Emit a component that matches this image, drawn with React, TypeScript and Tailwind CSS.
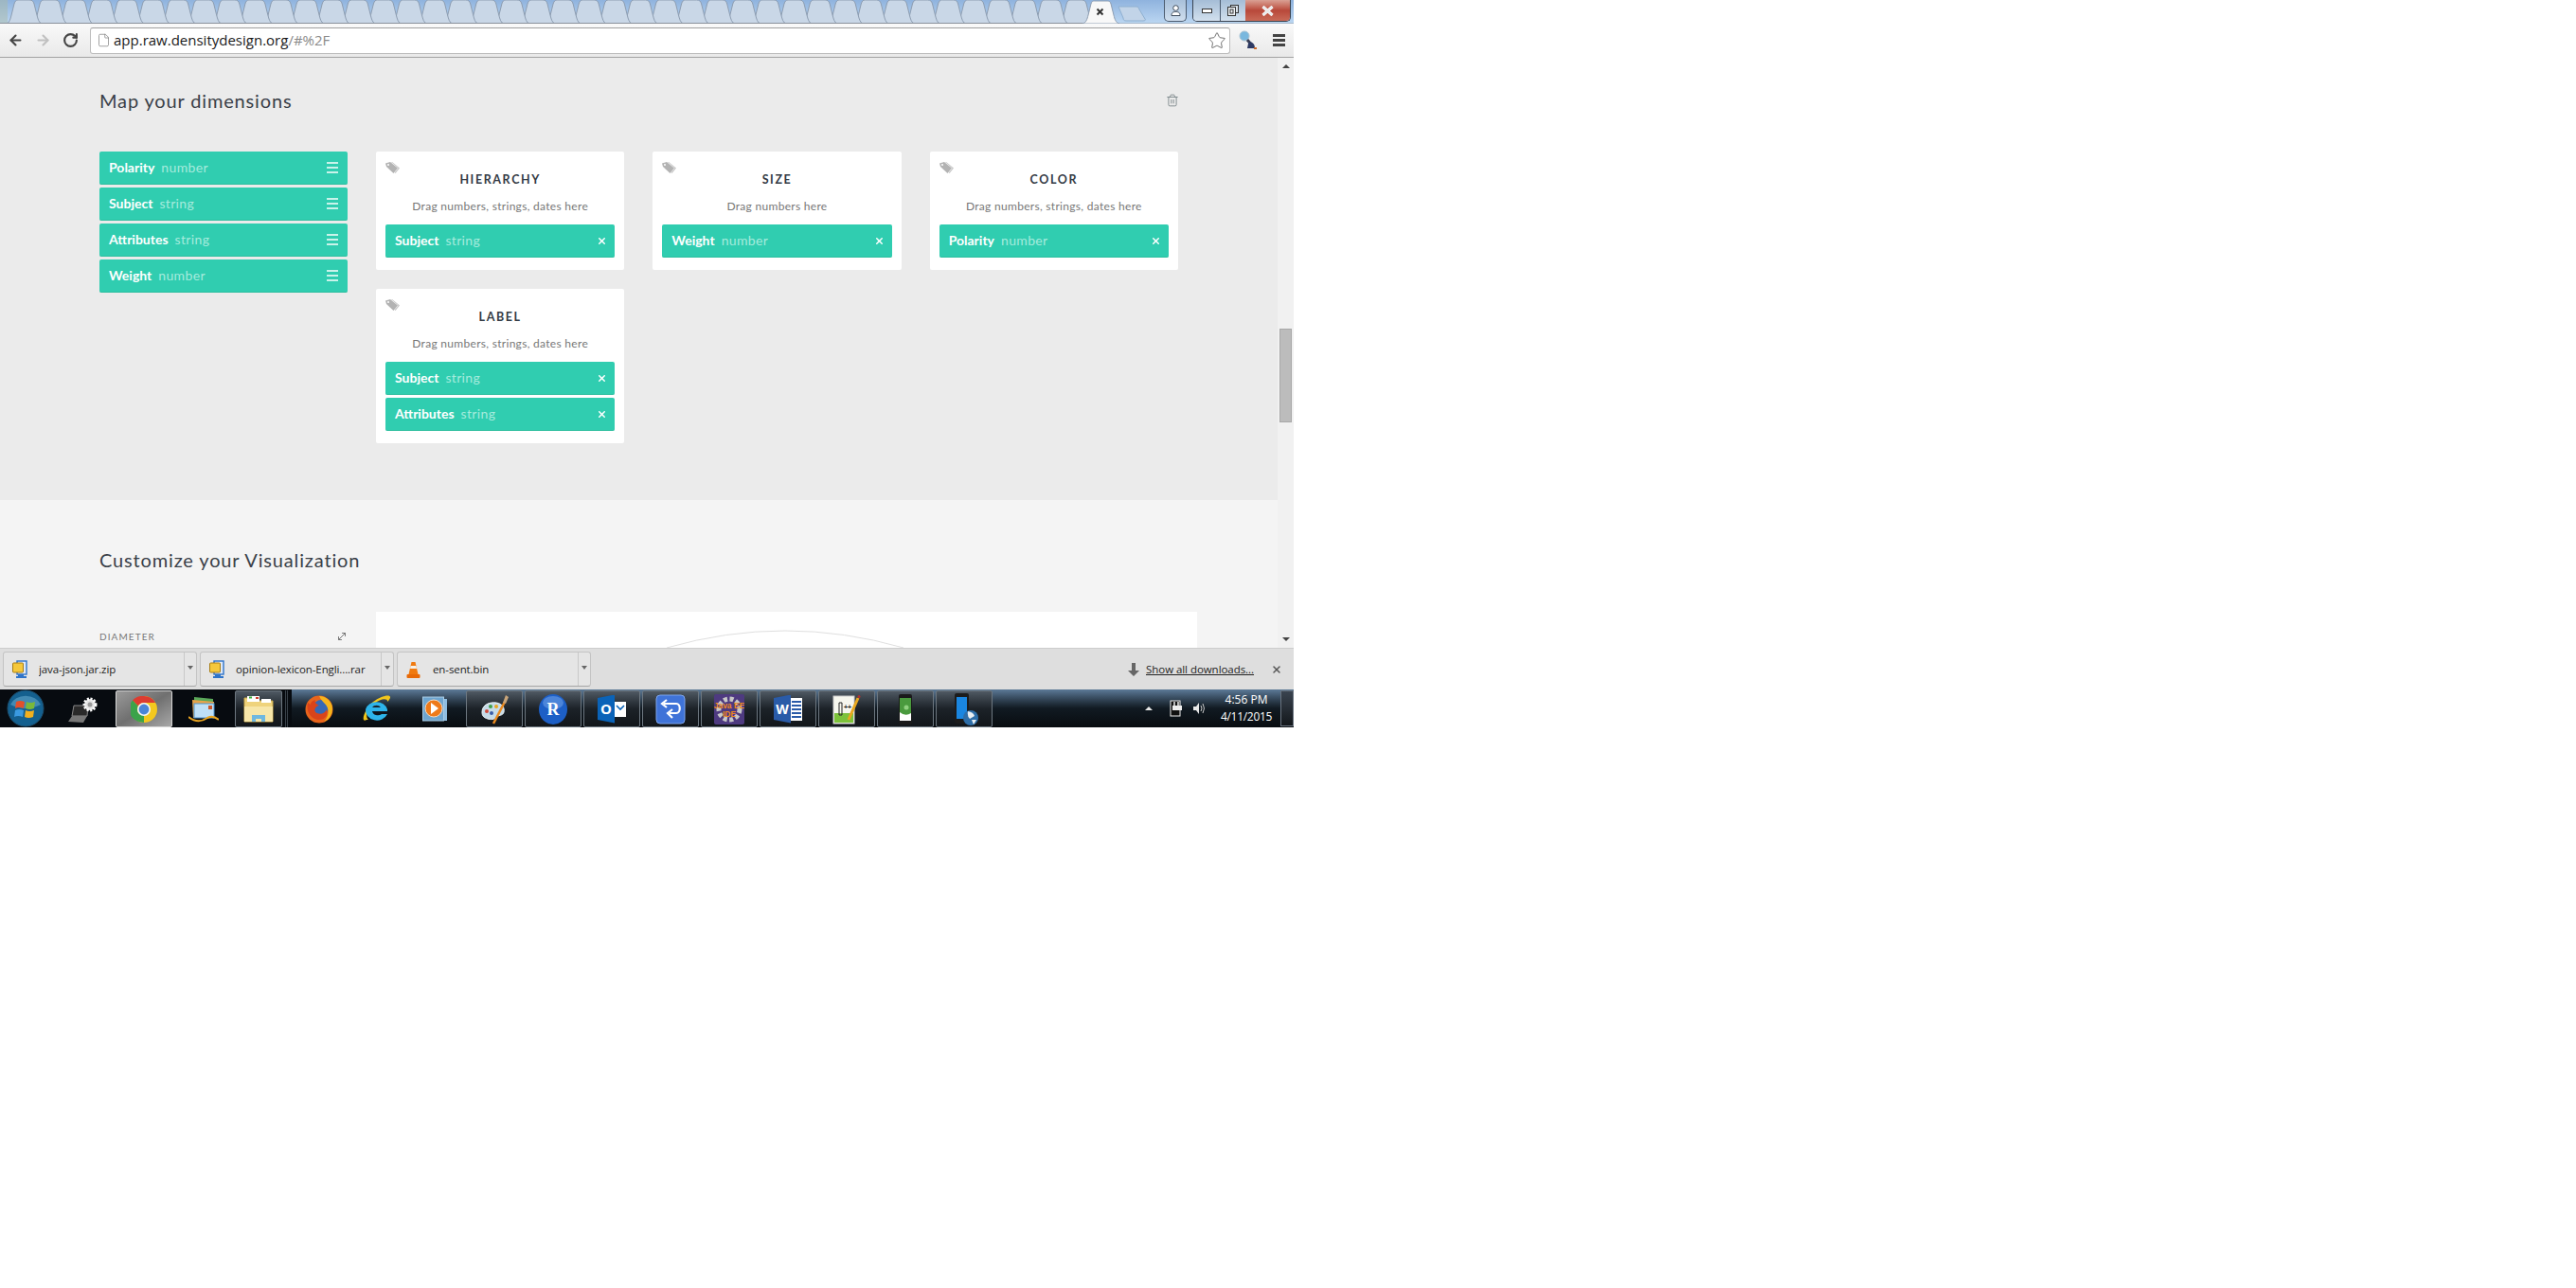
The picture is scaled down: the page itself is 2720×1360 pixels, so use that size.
import { ArrowLeft, ArrowRight, RotateCw, Star, X, Trash2, MoveDiagonal, File } from "lucide-react";

const chrome = "font-['Open_Sans',sans-serif]";
const karla = "font-['Lato',sans-serif]";

const Pill = ({ name, type, close }: { name: string; type: string; close?: boolean }) => (
  <div className="flex h-[35px] items-center justify-between rounded-[2px] border-b border-[#2dbf9f] bg-[#30cdb0] px-[10px]">
    <div className="flex items-baseline gap-[7px] pb-[2px] text-[14px]">
      <span className="font-bold text-white">{name}</span>
      <span className="tracking-[0.35px] text-[#a6ebdd]">{type}</span>
    </div>
    {close ? (
      <X size={11} strokeWidth={3.2} className="mr-[-2px] text-white" />
    ) : (
      <div className="flex w-[12px] flex-col gap-[3px]">
        <div className="h-[2px] bg-[#c9f3ea]" />
        <div className="h-[2px] bg-[#c9f3ea]" />
        <div className="h-[2px] bg-[#c9f3ea]" />
      </div>
    )}
  </div>
);

const TagIcon = () => (
  <svg width="16" height="12" viewBox="0 0 16 12" className="absolute left-[10px] top-[11px]">
    <path d="M0 1.5 L5 0 L13 6.5 L8.5 12 L1 5 Z" fill="#b3b3b3" />
    <path d="M7 0 L15 6.5 L10.5 12 L9.7 11.3 L13.5 6.5 L6 0 Z" fill="#c4c4c4" />
    <circle cx="3" cy="3" r="1" fill="#fff" />
  </svg>
);

const Card = ({ title, hint, items }: { title: string; hint: string; items: [string, string][] }) => (
  <div className="relative rounded-[2px] bg-white px-[10px] pb-[13px] pt-[10px]">
    <TagIcon />
    <div className="mt-[10px] text-center text-[12.5px] font-bold leading-[20px] tracking-[1.6px] text-[#333a44]">{title}</div>
    <div className="mt-[9px] text-center text-[12px] leading-[18px] tracking-[0.3px] text-[#777]">{hint}</div>
    <div className="mt-[10px] flex flex-col gap-[3px]">
      {items.map(([n, t]) => (
        <Pill key={n} name={n} type={t} close />
      ))}
    </div>
  </div>
);

const TabStrip = () => (
  <div className="relative h-[25px] shrink-0 bg-linear-to-b from-[#8fb3de] to-[#bcd7f2]">
    <svg width="1366" height="25" className="block">
      <rect x="0" y="0" width="8" height="25" fill="#a9b9a9" opacity="0.5" />
      {Array.from({ length: 42 })
        .map((_, i) => 7 + i * 27.1)
        .reverse()
        .map((x) => (
          <path
            key={x}
            d={`M${x} 25 C${x + 3} 24 ${x + 4} 20 ${x + 5} 16 L${x + 8} 4 C${x + 9} 1 ${x + 10} 0 ${x + 12} 0 L${x + 24} 0 C${x + 27} 0 ${x + 28} 1 ${x + 29} 4 L${x + 32} 16 C${x + 33} 20 ${x + 34} 24 ${x + 37} 25 Z`}
            fill="#c9d7e7"
            stroke="#8d9db1"
            strokeWidth="1"
          />
        ))}
      <rect x="0" y="24" width="1146" height="1" fill="#8a929c" />
      <rect x="1180" y="24" width="186" height="1" fill="#a6b8cc" />
      <path d="M1143 25 C1147 24 1148 20 1149 16 L1152 4 C1153 1 1154 1 1156 1 L1168 1 C1171 1 1172 1 1173 4 L1176 16 C1177 20 1178 24 1182 25 Z" fill="#f8f8f8" stroke="#8d9db1" />
      <path d="M1181 7 L1200 7 C1202 7 1202 8 1203 10 L1209 20 C1210 21 1209 22 1207 22 L1189 22 C1187 22 1186 21 1186 19 Z" fill="#c2d4e8" stroke="#8fb0d0" />
      <path d="M1158.5 9.5 L1164.5 15.5 M1164.5 9.5 L1158.5 15.5" stroke="#333" strokeWidth="2" />
    </svg>
    <div className="absolute right-[113px] top-0 flex h-[23px] w-[24px] items-center justify-center rounded-b-[5px] border border-t-0 border-[#4c5c70] bg-linear-to-b from-[#a8c0da] to-[#cfdeee]">
      <svg width="11" height="13" viewBox="0 0 11 13">
        <circle cx="5.5" cy="3.5" r="2.8" fill="#fff" stroke="#3d4a5a" />
        <path d="M1 11.5 C1 8 3 7.5 5.5 7.5 C8 7.5 10 8 10 11.5 Z" fill="#fff" stroke="#3d4a5a" />
      </svg>
    </div>
    <div className="absolute right-[3px] top-0 flex h-[23px] overflow-hidden rounded-b-[5px] border border-t-0 border-[#3a4450]">
      <div className="flex w-[29px] items-center justify-center border-r border-[#4c5c70] bg-linear-to-b from-[#a5bdd6] to-[#d2e0ee]">
        <div className="h-[5px] w-[11px] border border-[#333] bg-white" />
      </div>
      <div className="flex w-[26px] items-center justify-center bg-linear-to-b from-[#a5bdd6] to-[#d2e0ee]">
        <svg width="12" height="12" viewBox="0 0 12 12">
          <rect x="3.5" y="0.5" width="8" height="8" fill="#dde6ef" stroke="#333" />
          <rect x="0.5" y="2.5" width="8" height="9" fill="#eef2f6" stroke="#333" />
          <rect x="3" y="5" width="3" height="4" fill="none" stroke="#333" />
        </svg>
      </div>
      <div className="flex w-[47px] items-center justify-center bg-linear-to-b from-[#d9a094] via-[#b8483a] to-[#c96a58]">
        <svg width="13" height="11" viewBox="0 0 13 11">
          <path d="M1.5 1 L11.5 10 M11.5 1 L1.5 10" stroke="#fff" strokeWidth="3.2" />
          <path d="M1.5 1 L11.5 10 M11.5 1 L1.5 10" stroke="#e8eaec" strokeWidth="2" />
        </svg>
      </div>
    </div>
  </div>
);

const Toolbar = () => (
  <div className={`flex h-[36px] shrink-0 items-center border-b border-[#a3a3a3] bg-linear-to-b from-[#f9f9f9] to-[#e9e9e9] ${chrome}`}>
    <div className="ml-[8px] flex w-[87px] shrink-0 items-center gap-[12px]">
      <ArrowLeft size={17} strokeWidth={3} className="text-[#444]" />
      <ArrowRight size={17} strokeWidth={3} className="text-[#c0c0c0]" />
      <RotateCw size={17} strokeWidth={3} className="text-[#444]" />
    </div>
    <div className="flex h-[28px] w-[1204px] shrink-0 items-center rounded-[3px] border border-[#bdbdbd] border-t-[#a0a0a0] bg-white pl-[6px] pr-[3px]">
      <File size={15} strokeWidth={1.1} className="mr-[3px] text-[#777]" />
      <span className="text-[15px] leading-none text-[#1a1a1a]">app.raw.densitydesign.org</span>
      <span className="text-[15px] leading-none text-[#8a8a8a]">/#%2F</span>
      <Star size={20} strokeWidth={1} className="ml-auto text-[#555]" />
    </div>
    <svg width="20" height="24" viewBox="0 0 20 24" className="ml-[9px] shrink-0">
      <circle cx="6" cy="7" r="5" fill="#7ab8de" stroke="#a8c4d4" />
      <path d="M9 11 L15 18" stroke="#3a3f55" strokeWidth="3" />
      <path d="M10 15 C12 12 17 14 17 20 L9 20 Z" fill="#2e3a63" />
      <rect x="16" y="19" width="3" height="2" fill="#c96a2a" />
    </svg>
    <div className="ml-[16px] flex w-[13px] shrink-0 flex-col gap-[2px]">
      <div className="h-[3px] bg-[#444]" />
      <div className="h-[3px] bg-[#444]" />
      <div className="h-[3px] bg-[#444]" />
    </div>
  </div>
);

const Scrollbar = () => (
  <div className="relative flex h-full w-[17px] shrink-0 flex-col items-center justify-between bg-[#f1f1f1] py-[7px]">
    <div className="h-0 w-0 border-x-[4px] border-b-[4px] border-x-transparent border-b-[#444]" />
    <div className="absolute left-[2px] top-[286px] h-[99px] w-[13px] border border-[#a8a8a8] bg-[#bcbcbc]" />
    <div className="h-0 w-0 border-x-[4px] border-t-[4px] border-x-transparent border-t-[#444]" />
  </div>
);

const DownloadItem = ({ name, icon }: { name: string; icon: React.ReactNode }) => (
  <div className="flex h-[37px] w-[205px] shrink-0 rounded-[3px] border border-[#c4c4c4] border-b-[#a6a6a6] bg-[#e5e5e5]">
    <div className="flex w-[191px] items-center border-r border-[#c8c8c8] pl-[9px]">
      <div className="w-[28px] shrink-0">{icon}</div>
      <span className="truncate text-[11.5px] tracking-[-0.1px] text-[#222]">{name}</span>
    </div>
    <div className="flex flex-1 items-center justify-center">
      <div className="mb-[3px] h-0 w-0 border-x-[3px] border-t-[4px] border-x-transparent border-t-[#666]" />
    </div>
  </div>
);

const ZipIcon = () => (
  <svg width="17" height="20" viewBox="0 0 17 20">
    <rect x="5" y="1" width="10" height="14" fill="#dfe9f7" stroke="#2f74c9" strokeWidth="1.4" />
    <rect x="0.5" y="3" width="11" height="10" rx="1" fill="#f5c83c" stroke="#a77d14" />
    <rect x="6" y="15" width="6" height="2" fill="#2f74c9" />
    <rect x="4" y="17" width="11" height="2" fill="#2f74c9" />
  </svg>
);

const ConeIcon = () => (
  <svg width="15" height="20" viewBox="0 0 15 20">
    <path d="M5.5 2 L9.5 2 L12.5 15 L2.5 15 Z" fill="#f07a10" />
    <path d="M4.6 6 L10.4 6 L11 9 L4 9 Z" fill="#f6f1e8" />
    <rect x="0.5" y="15" width="14" height="4" rx="1" fill="#e86a08" />
  </svg>
);

const DownloadBar = () => (
  <div className={`flex h-[44px] shrink-0 items-center border-t border-[#cdcdcd] bg-[#dedede] pl-[3px] ${chrome}`}>
    <div className="flex gap-[3px]">
      <DownloadItem name="java-json.jar.zip" icon={<ZipIcon />} />
      <DownloadItem name="opinion-lexicon-Engli....rar" icon={<ZipIcon />} />
      <DownloadItem name="en-sent.bin" icon={<ConeIcon />} />
    </div>
    <svg width="12" height="14" viewBox="0 0 12 14" className="ml-[567px] shrink-0">
      <path d="M4 0 L8 0 L8 8 L12 8 L6 14 L0 8 L4 8 Z" fill="#666" />
    </svg>
    <span className="ml-[7px] text-[11.5px] tracking-[-0.05px] text-[#222] underline">Show all downloads...</span>
    <X size={12} strokeWidth={3} className="ml-[18px] text-[#555]" />
  </div>
);

const Orb = () => (
  <svg width="40" height="40" viewBox="0 0 40 40">
    <circle cx="20" cy="20" r="19" fill="#14608f" stroke="#1d4e6e" />
    <path d="M4 16 A17 14 0 0 1 36 16 Q20 24 4 16 Z" fill="#6fb4d8" opacity="0.5" />
    <path d="M10 13 Q14 11 19 13 L18 20 Q13 18 9 20 Z" fill="#e2502b" />
    <path d="M21 13 Q25 15 30 13 L29 20 Q24 22 20 20 Z" fill="#7ab83a" />
    <path d="M9 22 Q13 20 18 22 L17 29 Q12 27 8 29 Z" fill="#3a9ae0" />
    <path d="M20 22 Q24 24 29 22 L28 29 Q23 31 19 29 Z" fill="#f2b01e" />
  </svg>
);

const Laptop = () => (
  <svg width="32" height="30" viewBox="0 0 32 30">
    <path d="M6 11 L21 11 L20 22 L4 22 Z" fill="#2a2a2a" stroke="#888" />
    <path d="M4 22 L20 22 L16 29 L0 28 Z" fill="#777" />
    <circle cx="23" cy="10" r="6" fill="#e4e4e4" stroke="#fff" strokeWidth="3" strokeDasharray="2 1.5" />
    <circle cx="23" cy="10" r="2.5" fill="#999" />
  </svg>
);

const ChromeIcon = () => (
  <svg width="28" height="28" viewBox="0 0 28 28">
    <circle cx="14" cy="14" r="14" fill="#f3c81e" />
    <path d="M14 0 A14 14 0 0 1 26.1 7 L14 7 A7 7 0 0 0 7.9 10.5 L2 4.6 A14 14 0 0 1 14 0 Z" fill="#dc3c31" />
    <path d="M2 4.6 L7.9 10.5 A7 7 0 0 0 12 20.7 L8 27 A14 14 0 0 1 2 4.6 Z" fill="#3ba34a" />
    <path d="M8 27 L14 14 L14 28 Z" fill="#3ba34a" />
    <circle cx="14" cy="14" r="6.2" fill="#4a85d8" stroke="#f4f4f4" strokeWidth="1.6" />
  </svg>
);

const MailIcon = () => (
  <svg width="32" height="30" viewBox="0 0 32 30">
    <path d="M6 2 L26 4 L26 22 L6 22 Z" fill="#5aa85a" />
    <path d="M4 5 L27 7 L27 24 L5 24 Z" fill="#e7a44a" />
    <rect x="6" y="9" width="21" height="15" fill="#bfe0f7" stroke="#4c93cf" />
    <rect x="21" y="11" width="4" height="4" fill="#c9552a" />
    <path d="M0 23 Q10 31 20 24 Q26 21 32 26" fill="none" stroke="#e9a420" strokeWidth="2" />
  </svg>
);

const FolderIcon = () => (
  <svg width="32" height="30" viewBox="0 0 32 30">
    <path d="M1 3 L13 3 L15 6 L31 6 L31 28 L1 28 Z" fill="#efd37c" stroke="#c9a94a" />
    <rect x="4" y="1" width="13" height="6" fill="#fff" />
    <rect x="6" y="1.5" width="3" height="2" fill="#3faf3f" />
    <rect x="13" y="2" width="3" height="2" fill="#d03a2a" />
    <rect x="19" y="4" width="10" height="4" fill="#fff" />
    <path d="M1 12 L31 12 L31 28 L1 28 Z" fill="#f7e6a8" />
    <path d="M9 28 L9 21 L23 21 L23 28 L19 28 L19 25 L13 25 L13 28 Z" fill="#6fb8e0" />
  </svg>
);

const Firefox = () => (
  <svg width="30" height="30" viewBox="0 0 30 30">
    <circle cx="15" cy="15" r="14.5" fill="#e8641b" />
    <circle cx="17" cy="13" r="8" fill="#3668b4" />
    <path d="M15 1 A14 14 0 0 1 29 15 A14 14 0 0 1 20 28 C26 22 26 14 21 9 C19 7 17 5 15 1 Z" fill="#f5b51c" />
    <path d="M3 8 C1 16 5 24 13 26 C21 27 25 21 23 15 C21 20 15 21 11 18 C9 15 12 11 15 11 C11 9 10 7 11 5 C7 6 6 8 6 10 Z" fill="#d9441a" />
  </svg>
);

const IE = () => (
  <svg width="32" height="30" viewBox="0 0 32 30">
    <path d="M5 26 C-2 30 3 14 12 7 C20 1 31 -2 30 3 C29 5 28 6 27 7 C28 3 20 3 13 9 C6 15 3 23 7 26 Z" fill="#f0c51c" />
    <path d="M4 15 A12 11 0 0 1 27 15 L27 17 L11 17 A6 5 0 0 0 21 20 L27 20 A12 11 0 0 1 4 15 Z M11 13 L20 13 A5 4 0 0 0 11 13 Z" fill="#2db4ea" fillRule="evenodd" />
  </svg>
);

const Wmp = () => (
  <svg width="28" height="28" viewBox="0 0 28 28">
    <rect x="4" y="3" width="22" height="23" fill="#8fbde0" />
    <rect x="0.5" y="1" width="22" height="25" fill="#6ea5cf" stroke="#a9cbe4" />
    <circle cx="12" cy="13" r="9" fill="#ee7a1a" stroke="#f7d8bb" />
    <path d="M9 7 L17 13 L9 19 Z" fill="#fff" />
  </svg>
);

const Palette = () => (
  <svg width="32" height="32" viewBox="0 0 32 32">
    <path d="M3 19 C3 11 11 8 18 9 C25 10 27 15 26 19 C25 23 20 22 18 24 C16 27 12 27 9 26 C5 25 3 23 3 19 Z" fill="#c6dbe8" stroke="#eef4f8" />
    <circle cx="8" cy="18" r="2" fill="#d04a3a" />
    <circle cx="12" cy="13" r="2" fill="#3f9f4a" />
    <circle cx="18" cy="13" r="2" fill="#e8a421" />
    <circle cx="13" cy="20" r="2" fill="#3a5da8" />
    <path d="M15 31 L27 8" stroke="#e98a20" strokeWidth="2.5" />
    <path d="M25 9 L28 1 L31 3 L28 10 Z" fill="#c9a57a" />
  </svg>
);

const RIcon = () => (
  <svg width="30" height="32" viewBox="0 0 30 32">
    <ellipse cx="15" cy="16" rx="15" ry="16" fill="#1d5fc6" />
    <ellipse cx="15" cy="9" rx="11" ry="7" fill="#6c9fe6" opacity="0.6" />
    <text x="15" y="22" textAnchor="middle" fontSize="18" fontWeight="700" fontFamily="Liberation Serif, serif" fill="#fff">R</text>
  </svg>
);

const Outlook = () => (
  <div className="relative flex h-[30px] w-[30px] items-center">
    <div className="flex h-[30px] w-[18px] items-center justify-center bg-[#0a63b8] text-[15px] font-bold leading-none text-white [clip-path:polygon(0_12%,100%_0,100%_100%,0_88%)]">O</div>
    <div className="flex h-[16px] w-[12px] items-center justify-center bg-white">
      <svg width="10" height="9" viewBox="0 0 10 9">
        <path d="M1 1 L5 5 L9 1" fill="none" stroke="#0a63b8" strokeWidth="1.6" />
      </svg>
    </div>
  </div>
);

const Arrows = () => (
  <svg width="32" height="32" viewBox="0 0 32 32">
    <rect x="1" y="1" width="30" height="30" rx="4" fill="#3f73d8" stroke="#7ea6ee" />
    <path d="M9 10 L22 10 C27 10 27 20 22 20 L15 20 M12 6 L7 10 L12 14 M18 16 L13 20 L18 25" fill="none" stroke="#fff" strokeWidth="2.2" />
  </svg>
);

const JavaEE = () => (
  <svg width="32" height="32" viewBox="0 0 32 32">
    <rect x="0" y="0" width="32" height="32" rx="2" fill="#4e3a80" />
    <circle cx="16" cy="16" r="11" fill="none" stroke="#c7c7c7" strokeWidth="5" strokeDasharray="4 2.5" />
    <text x="16" y="15" textAnchor="middle" fontSize="8.5" fontWeight="700" fontFamily="Liberation Sans, sans-serif" fill="#f08a1e">Java EE</text>
    <text x="16" y="24" textAnchor="middle" fontSize="8.5" fontWeight="700" fontFamily="Liberation Sans, sans-serif" fill="#f08a1e">IDE</text>
  </svg>
);

const Word = () => (
  <div className="flex h-[30px] w-[30px] items-center">
    <div className="flex h-[30px] w-[18px] items-center justify-center bg-[#2a5ba8] text-[14px] font-bold leading-none text-white [clip-path:polygon(0_12%,100%_0,100%_100%,0_88%)]">W</div>
    <div className="flex h-[24px] w-[12px] flex-col justify-center gap-[2px] bg-white px-[1px]">
      <div className="h-[2px] bg-[#2a5ba8]" />
      <div className="h-[2px] bg-[#2a5ba8]" />
      <div className="h-[2px] bg-[#2a5ba8]" />
      <div className="h-[2px] bg-[#2a5ba8]" />
      <div className="h-[2px] bg-[#2a5ba8]" />
    </div>
  </div>
);

const NotepadPP = () => (
  <svg width="30" height="32" viewBox="0 0 30 32">
    <rect x="1" y="2" width="22" height="29" fill="#f6f6ee" stroke="#ccc" />
    <rect x="2" y="20" width="20" height="10" fill="#7cc23a" />
    <path d="M7 9 L7 22 L10 22 L10 9 Z" fill="none" stroke="#222" />
    <text x="16" y="16" textAnchor="middle" fontSize="7" fontWeight="700" fontFamily="Liberation Sans, sans-serif" fill="#222">++</text>
    <path d="M17 27 L27 4" stroke="#e8a820" strokeWidth="3" />
    <circle cx="28" cy="2.5" r="1.5" fill="#b03030" />
  </svg>
);

const Phone = () => (
  <svg width="16" height="32" viewBox="0 0 16 32">
    <rect x="1" y="0" width="14" height="32" rx="2" fill="#1a1a1a" />
    <rect x="2" y="4" width="12" height="24" fill="#fff" />
    <path d="M2 4 L14 4 L14 20 Q8 24 2 19 Z" fill="#4a9a3e" />
    <circle cx="9" cy="14" r="2.5" fill="#8fd07f" />
  </svg>
);

const PhoneGlobe = () => (
  <svg width="32" height="34" viewBox="0 0 32 34">
    <rect x="6" y="0" width="15" height="32" rx="2" fill="#1c1c1c" />
    <rect x="8" y="4" width="11" height="23" fill="#1a86e0" />
    <circle cx="23" cy="26" r="8" fill="#2e6ea8" />
    <path d="M20 19 Q26 20 27 24 L22 27 Q19 24 20 19 Z M24 28 L29 28 L26 33 Z" fill="#e8eef2" />
  </svg>
);

const Slot = ({ children, active, boxed, className = "w-[60px]" }: { children: React.ReactNode; active?: boolean; boxed?: boolean; className?: string }) => (
  <div
    className={`flex h-[39px] shrink-0 items-center justify-center rounded-[2px] border ${className} ${
      active
        ? "w-[59px] border-[#d8d8d8] bg-linear-to-br from-[#9a9a9a] via-[#707070] to-[#a8a8a8]"
        : boxed
          ? "border-[#6d7780] bg-linear-to-b from-[#4f5963] via-[#1c2228] to-[#12161a]"
          : "border-transparent"
    }`}
  >
    {children}
  </div>
);

const Taskbar = () => (
  <div className={`flex h-[40px] shrink-0 items-end overflow-hidden bg-linear-to-b from-[#5c7a98] via-[#111a22] via-50% to-[#080c10] ${chrome}`}>
    <div className="flex h-[40px] w-[308px] shrink-0 items-end gap-[2px] bg-[#070b10]">
      <div className="flex h-[40px] w-[54px] shrink-0 items-center justify-center">
        <Orb />
      </div>
      <Slot className="w-[64px]"><Laptop /></Slot>
      <Slot active><ChromeIcon /></Slot>
      <Slot className="w-[62px]"><MailIcon /></Slot>
      <Slot boxed className="w-[50px]"><FolderIcon /></Slot>
      <div className="ml-[1px] h-[39px] w-[3px] border-x border-[#3a424a]" />
    </div>
    <div className="flex h-[40px] items-end gap-[2px]">
      <Slot className="w-[58px]"><Firefox /></Slot>
      <Slot><IE /></Slot>
      <Slot><Wmp /></Slot>
      <Slot boxed><Palette /></Slot>
      <Slot boxed><RIcon /></Slot>
      <Slot boxed><Outlook /></Slot>
      <Slot boxed><Arrows /></Slot>
      <Slot boxed><JavaEE /></Slot>
      <Slot boxed><Word /></Slot>
      <Slot boxed><NotepadPP /></Slot>
      <Slot boxed><Phone /></Slot>
      <Slot boxed><PhoneGlobe /></Slot>
    </div>
    <div className="flex h-[40px] flex-1 items-center justify-end">
      <div className="mr-[18px] h-0 w-0 border-x-[4px] border-b-[4px] border-x-transparent border-b-[#e8e8e8]" />
      <svg width="14" height="18" viewBox="0 0 14 18" className="mr-[10px]">
        <rect x="1" y="1" width="10" height="16" fill="#111" stroke="#eee" />
        <rect x="3" y="6" width="10" height="5" fill="#eee" />
        <path d="M5 2 L5 6 M9 2 L9 6" stroke="#eee" strokeWidth="1.5" />
      </svg>
      <svg width="15" height="14" viewBox="0 0 15 14" className="mr-[15px]">
        <path d="M1 5 L4 5 L7 1 L7 13 L4 9 L1 9 Z" fill="#e8e8e8" />
        <path d="M9 4 Q11 7 9 10 M11 2 Q14 7 11 12" fill="none" stroke="#c8c8c8" />
      </svg>
      <div className="mr-[9px] flex w-[54px] flex-col items-center text-[12px] leading-[18px] text-white">
        <span>4:56 PM</span>
        <span className="tracking-[-0.3px]">4/11/2015</span>
      </div>
      <div className="h-[38px] w-[14px] border border-[#6a7480] bg-linear-to-b from-[#3a4450] to-[#14181c]" />
    </div>
  </div>
);

export default function App() {
  return (
    <div className="min-h-[1360px] bg-white">
      <div className="flex h-[768px] w-[1366px] flex-col overflow-hidden">
        <TabStrip />
        <Toolbar />
        <div className={`flex h-[623px] shrink-0 ${karla}`}>
          <div className="min-w-0 flex-1">
            <section className="h-[467px] bg-[#ebebeb] px-[105px]">
              <div className="flex items-center justify-between pt-[29px]">
                <h2 className="text-[20px] leading-[32px] tracking-[0.85px] text-[#3a4048]">Map your dimensions</h2>
                <Trash2 size={14} strokeWidth={1.4} className="mr-[-1px] text-[#6f7c80]" />
              </div>
              <div className="mt-[38px] flex w-[1139px] gap-[30px]">
                <div className="flex w-[262px] shrink-0 flex-col gap-[3px]">
                  <Pill name="Polarity" type="number" />
                  <Pill name="Subject" type="string" />
                  <Pill name="Attributes" type="string" />
                  <Pill name="Weight" type="number" />
                </div>
                <div className="grid w-[847px] grid-cols-3 items-start gap-x-[30px] gap-y-[20px]">
                  <Card title="HIERARCHY" hint="Drag numbers, strings, dates here" items={[["Subject", "string"]]} />
                  <Card title="SIZE" hint="Drag numbers here" items={[["Weight", "number"]]} />
                  <Card title="COLOR" hint="Drag numbers, strings, dates here" items={[["Polarity", "number"]]} />
                  <Card title="LABEL" hint="Drag numbers, strings, dates here" items={[["Subject", "string"], ["Attributes", "string"]]} />
                </div>
              </div>
            </section>
            <section className="h-[156px] overflow-hidden bg-[#f4f4f4] px-[105px]">
              <h2 className="pt-[47px] text-[20px] leading-[32px] tracking-[0.85px] text-[#3a4048]">Customize your Visualization</h2>
              <div className="mt-[39px] flex gap-[30px]">
                <div className="flex w-[262px] shrink-0 items-start justify-between pt-[20px]">
                  <span className="text-[10px] leading-[12px] tracking-[1.1px] text-[#777]">DIAMETER</span>
                  <MoveDiagonal size={12} className="text-[#777]" />
                </div>
                <div className="h-[60px] w-[867px] shrink-0 overflow-hidden bg-white pl-[304px] pt-[19px]">
                  <svg width="256" height="20" viewBox="0 0 256 20" className="block">
                    <path d="M3 19 Q128 -17 253 19" fill="none" stroke="#dfdfdf" />
                  </svg>
                </div>
              </div>
            </section>
          </div>
          <Scrollbar />
        </div>
        <DownloadBar />
        <Taskbar />
      </div>
    </div>
  );
}
